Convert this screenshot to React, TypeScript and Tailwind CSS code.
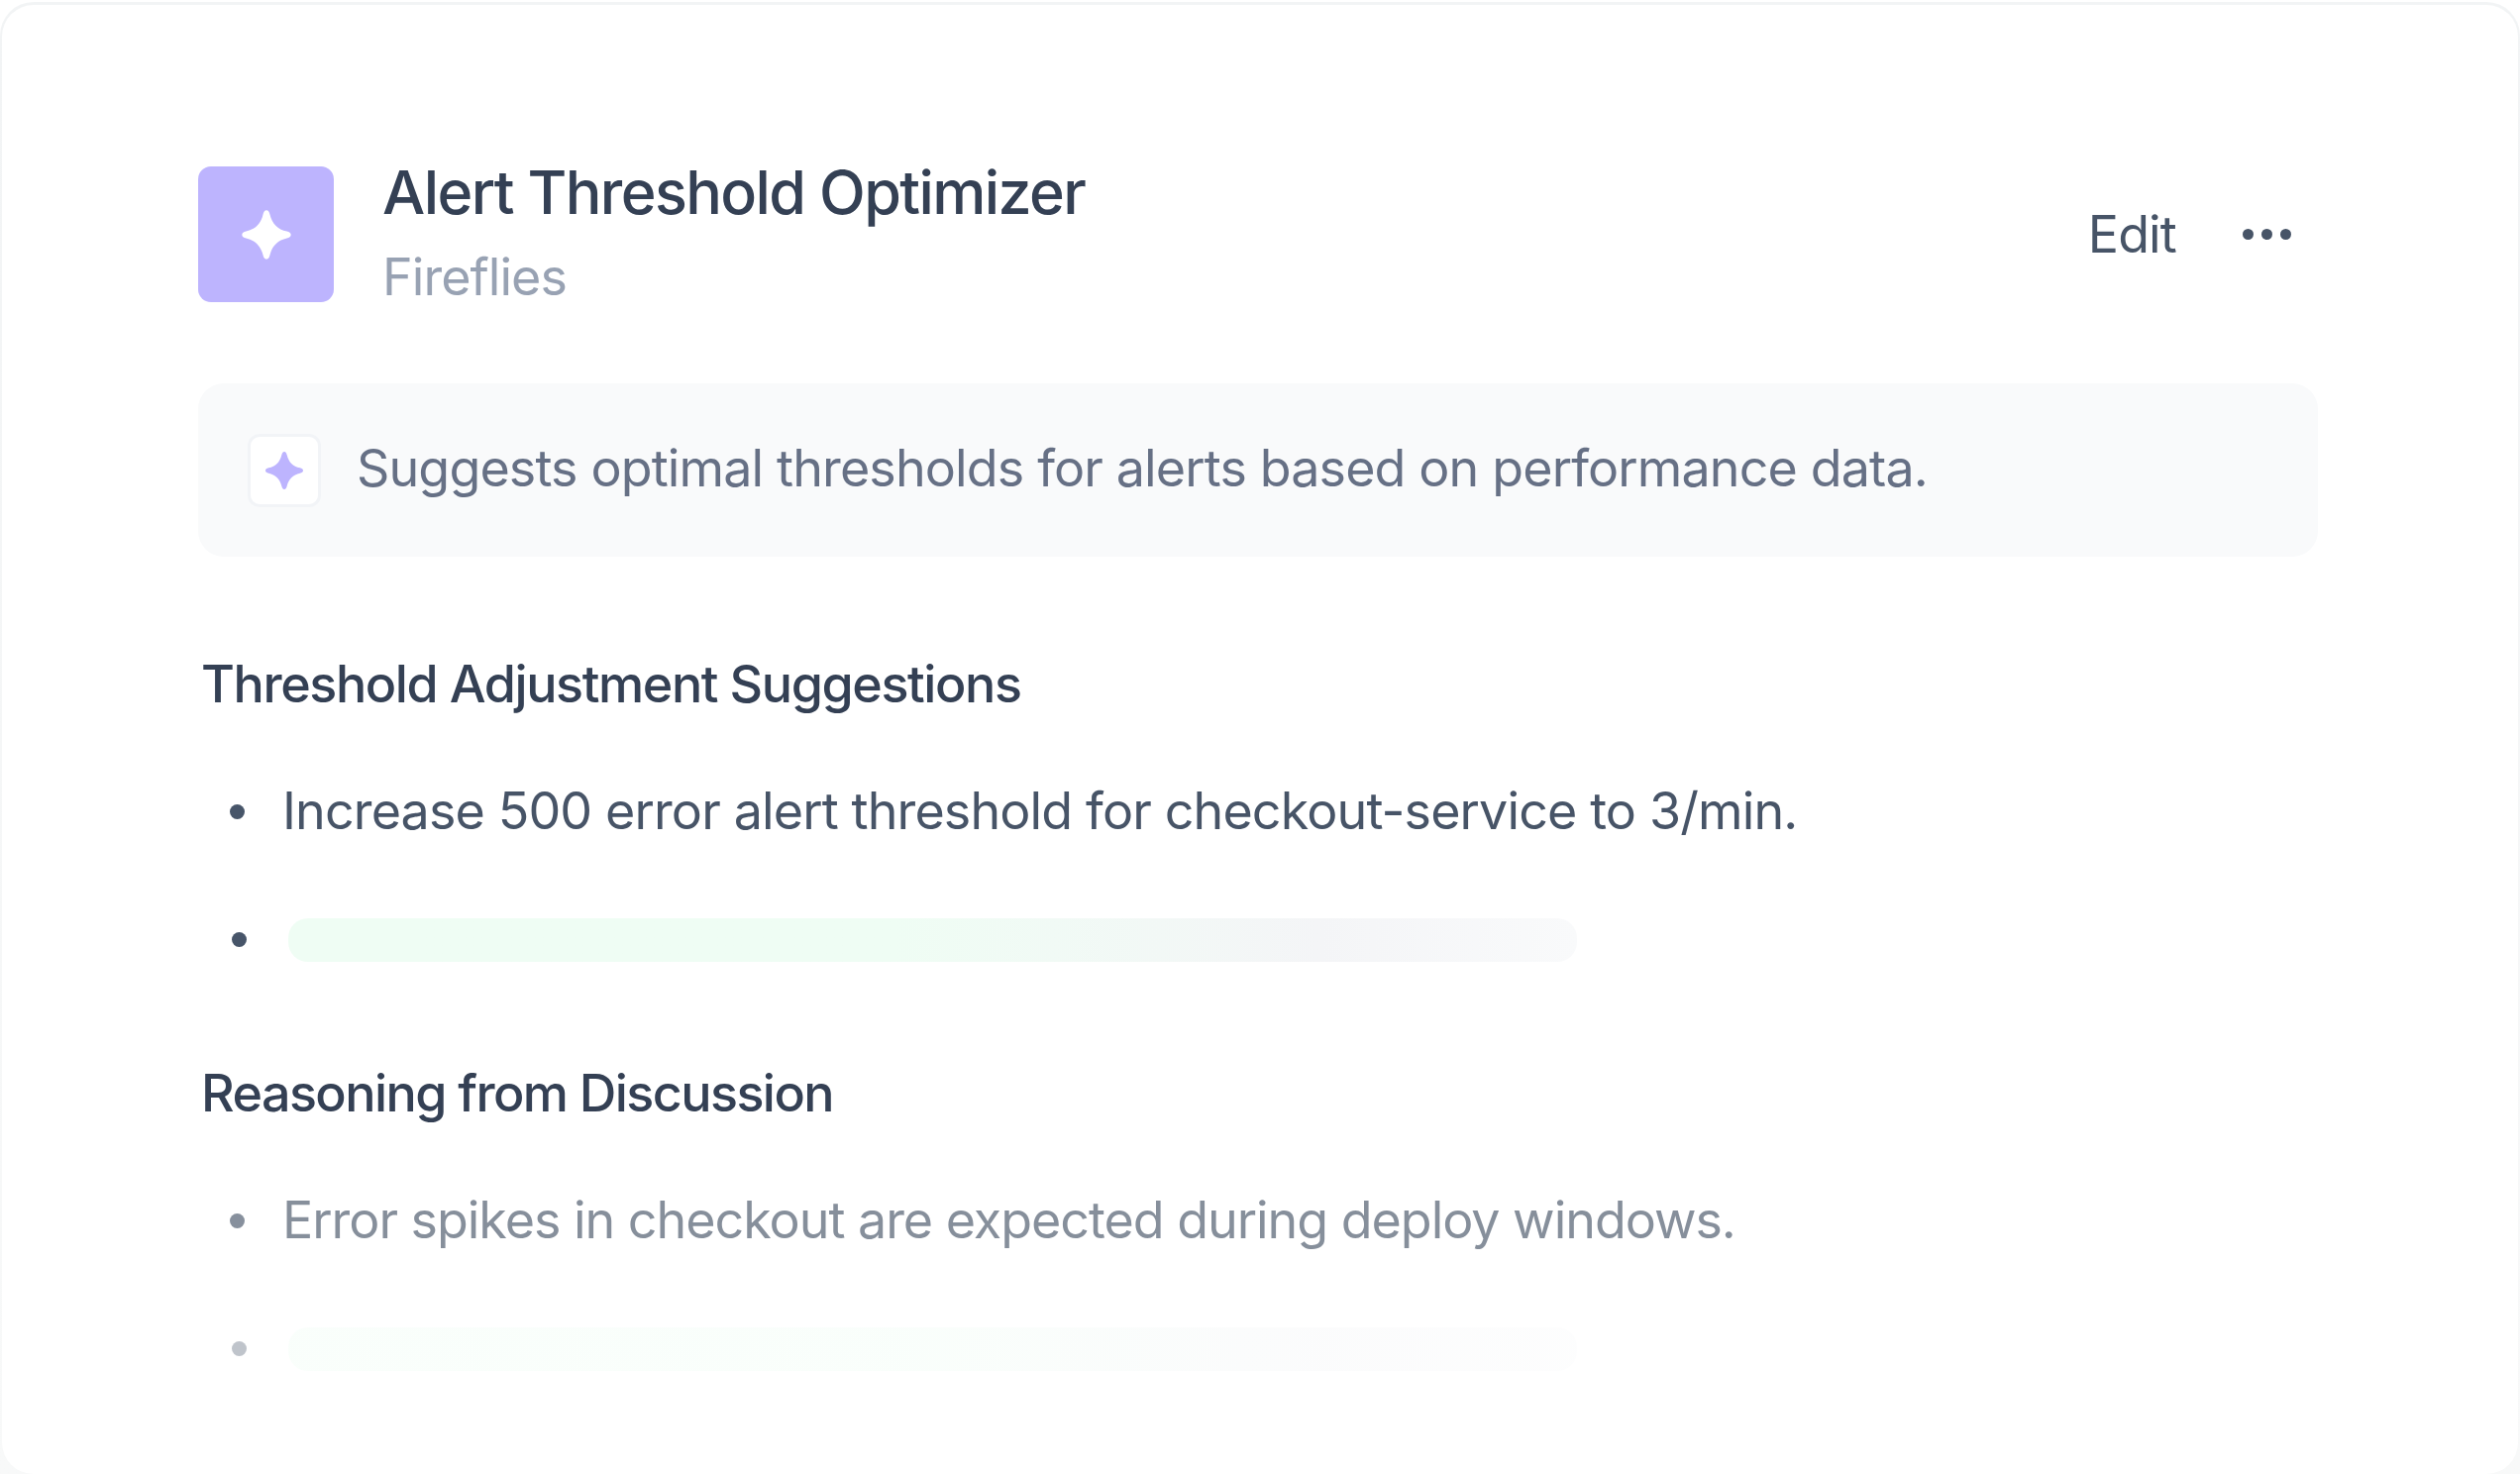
import React from 'react';

const font = "font-['Inter',sans-serif]";

const Sparkle = ({ className }: { className: string }) => (
  <svg viewBox="0 0 24 24" className={className} fill="currentColor">
    <path d="M12 0.6c0.9 0 1.3 0.8 1.6 1.9 1 4.3 3.6 7 7.9 7.9 1.1 0.3 1.9 0.7 1.9 1.6s-0.8 1.3-1.9 1.6c-4.3 1-6.9 3.6-7.9 7.9-0.3 1.1-0.7 1.9-1.6 1.9s-1.3-0.8-1.6-1.9c-1-4.3-3.6-6.9-7.9-7.9C1.4 13.3 0.6 12.9 0.6 12s0.8-1.3 1.9-1.6c4.3-0.9 6.9-3.6 7.9-7.9C10.7 1.4 11.1 0.6 12 0.6z" />
  </svg>
);

const Dot = ({ className }: { className: string }) => (
  <span className={`w-[15px] h-[15px] rounded-full bg-[#475569] shrink-0 ${className}`} />
);

const SkeletonBar = () => (
  <div className="w-[1301px] h-[44px] mt-[2px] rounded-[20px] bg-gradient-to-r from-[#effdf4] from-47% via-[#f4f5f7] via-80% to-[#f9fafb]" />
);

export default function App() {
  return (
    <div className="w-[2544px] h-[1488px] bg-white pt-[2px] overflow-hidden">
      <div className="h-full px-[2px] pt-[3px] rounded-t-[34px] bg-gradient-to-b from-[#f2f4f5] to-[#f8f9f9]">
        <div className={`h-full bg-white rounded-[32px] pt-[163px] pl-[198px] pr-[202px] ${font}`}>
          {/* header */}
          <div className="flex items-center h-[137px]">
            <div className="w-[137px] h-[137px] rounded-[13px] bg-[#bdb4fe] text-white flex items-center justify-center">
              <Sparkle className="w-[52px] h-[52px]" />
            </div>
            <div className="ml-[49px] flex-1 -mt-[4px]">
              <h1 className="text-[61px] leading-[68px] font-medium tracking-[-1.6px] text-[#344054]">Alert Threshold Optimizer</h1>
              <p className="text-[52px] leading-[60px] mt-[22px] tracking-[-0.95px] text-[#98a2b3]">Fireflies</p>
            </div>
            <button className="text-[52px] tracking-[-0.87px] text-[#475467]">Edit</button>
            <div className="flex gap-[8px] ml-[67px] mr-[27px]">
              <span className="w-[11px] h-[11px] rounded-full bg-[#475467]" />
              <span className="w-[11px] h-[11px] rounded-full bg-[#475467]" />
              <span className="w-[11px] h-[11px] rounded-full bg-[#475467]" />
            </div>
          </div>

          {/* description */}
          <div className="mt-[82px] h-[175px] rounded-[26px] bg-[#f9fafb] flex items-center pl-[50px]">
            <div className="w-[74px] h-[74px] rounded-[12px] bg-white border-[3px] border-[#f2f4f7] flex items-center justify-center text-[#bdb4fe]">
              <Sparkle className="w-[40px] h-[40px]" />
            </div>
            <p className="ml-[36px] -mt-[3px] text-[52px] tracking-[-0.87px] text-[#667085]">Suggests optimal thresholds for alerts based on performance data.</p>
          </div>

          {/* suggestions */}
          <h2 className="mt-[97px] ml-[3px] text-[52px] leading-[64px] font-medium tracking-[-1.4px] text-[#344054]">Threshold Adjustment Suggestions</h2>
          <ul className="mt-[74px] flex flex-col gap-[85px] text-[52px] tracking-[-0.87px] text-[#475467]">
            <li className="flex items-center h-[44px] pl-[32px]">
              <Dot className="mr-[38px]" />
              Increase 500 error alert threshold for checkout-service to 3/min.
            </li>
            <li className="flex items-center h-[44px] pl-[34px]">
              <Dot className="mr-[42px]" />
              <SkeletonBar />
            </li>
          </ul>

          <h2 className="mt-[102px] ml-[3px] text-[52px] leading-[64px] font-medium tracking-[-1.55px] text-[#344054]">Reasoning from Discussion</h2>
          <ul className="mt-[74px] flex flex-col gap-[85px] text-[52px] tracking-[-1.03px] text-[#475467]">
            <li className="flex items-center h-[44px] pl-[32px] opacity-65">
              <Dot className="mr-[38px]" />
              Error spikes in checkout are expected during deploy windows.
            </li>
            <li className="flex items-center h-[44px] pl-[34px] opacity-35">
              <Dot className="mr-[42px]" />
              <SkeletonBar />
            </li>
          </ul>
        </div>
      </div>
    </div>
  );
}
